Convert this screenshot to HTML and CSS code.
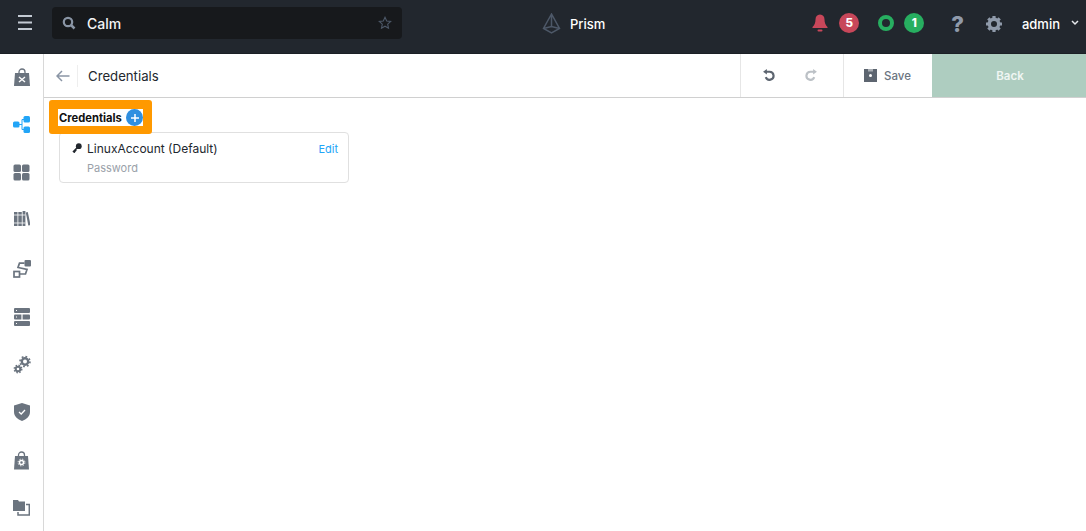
FILE: index.html
```html
<!DOCTYPE html>
<html lang="en">
  <head>
    <meta charset="utf-8" />
    <title>Prism - Calm</title>
    <link rel="stylesheet" href="styles.css">
  </head>
  <body>
    <header class="topbar">
      <svg class="menu-icon" width="16" height="15" viewBox="0 0 16 15">
        <path d="M1 1h14M1 7.500h14M1 14h14" stroke="#c3cad3" stroke-width="1.800" fill="none" />
      </svg>
      <div class="search">
        <svg width="14" height="14" viewBox="0 0 14 14">
          <circle cx="6" cy="6" r="4.200" stroke="#8a95a5" stroke-width="2.200" fill="none" />
          <path d="M9 9l3.500 3.500" stroke="#8a95a5" stroke-width="2.500" fill="none" />
        </svg>
        <span class="search-text">Calm</span>
        <svg class="star" width="14" height="14" viewBox="0 0 14 14">
          <path d="M7 1.300l1.700 3.700 4 .5-3 2.700.8 4L7 10.200 3.500 12.200l.8-4-3-2.700 4-.5z" stroke="#4d5868" stroke-width="1.100" fill="none" />
        </svg>
      </div>
      <div class="brand">
        <svg width="19" height="21" viewBox="0 0 19 21">
          <path d="M9.500 1L1.500 15.500l8 4.500 8-4.500zM9.500 1v12.500M1.500 15.500l8-2 8 2" stroke="#4d5868" stroke-width="1.500" fill="none" />
        </svg>
        <span>Prism</span>
      </div>
      <div class="status">
        <svg class="bell" width="16" height="18" viewBox="0 0 16 18">
          <path d="M8 0.500c-3 0-4.500 2.200-4.500 5 0 3.500-1 5.500-3 7.500v1h15v-1c-2-2-3-4-3-7.500 0-2.800-1.500-5-4.500-5z" fill="#c8475a" />
          <rect x="5.500" y="15.500" width="5" height="2" rx="1" fill="#c8475a" />
        </svg>
        <span class="count count-red">5</span>
        <span class="ring"></span>
        <span class="count count-green">1</span>
        <span class="help">?</span>
        <svg class="gear" width="18" height="18" viewBox="0 0 18 18">
          <circle cx="9" cy="9" r="4.700" stroke="#8f9aaa" stroke-width="3.400" fill="none" />
          <path d="M9 1v16M1 9h16M3.300 3.300l11.400 11.400M14.700 3.300L3.300 14.700" stroke="#8f9aaa" stroke-width="3.200" fill="none" stroke-dasharray="3.500 9 3.500" />
        </svg>
        <span class="user">admin</span>
        <svg width="8" height="6" viewBox="0 0 8 6">
          <path d="M1 1l3 3 3-3" stroke="#e6e9ed" stroke-width="1.500" fill="none" />
        </svg>
      </div>
    </header>

    <div class="main">
      <nav class="sidebar">
        <svg width="16" height="19" viewBox="0 0 16 19">
          <path d="M5 6V4a3 3 0 0 1 6 0v2" stroke="#6b747f" stroke-width="1.300" fill="none" />
          <path d="M1 5h14l1 13H0z" fill="#6b747f" />
          <path d="M5 9l6 5M11 9l-6 5" stroke="#fff" stroke-width="1.400" />
        </svg>
        <svg class="nudge" width="17" height="17" viewBox="0 0 17 17">
          <path d="M6 8.500h3M9 3.500v10M9 3.500h2M9 13.500h2" stroke="#22a5f7" stroke-width="1" fill="none" />
          <rect x="0" y="5.500" width="6.500" height="6" rx="1.500" fill="#22a5f7" />
          <rect x="10.500" y="0" width="6.500" height="6.500" rx="1.500" fill="#22a5f7" />
          <rect x="10.500" y="10.500" width="6.500" height="6.500" rx="1.500" fill="#22a5f7" />
        </svg>
        <svg class="nudge" width="17" height="17" viewBox="0 0 17 17">
          <rect x="0.500" y="0.500" width="7.500" height="7.500" rx="1.500" fill="#6b747f" />
          <rect x="9" y="0.500" width="7.500" height="7.500" rx="1.500" fill="#6b747f" />
          <rect x="0.500" y="9" width="7.500" height="7.500" rx="1.500" fill="#6b747f" />
          <rect x="9" y="9" width="7.500" height="7.500" rx="1.500" fill="#6b747f" />
        </svg>
        <svg class="books" width="16" height="16" viewBox="0 0 16 16">
          <path d="M0 1h3.500v14H0zM4.300 1h3.500v14H4.300zM8.600 0h2.800v15H8.600z" fill="#6b747f" />
          <path d="M11.800 1.500l2-.5L16.500 14l-2.200.6z" fill="#6b747f" />
          <path d="M0 4h11.400M0 12h11.400" stroke="#fff" stroke-width=".8" />
        </svg>
        <svg width="18" height="18" viewBox="0 0 18 18">
          <rect x="11.500" y="0" width="6.500" height="6.500" rx="1" fill="#6b747f" />
          <rect x="1" y="11.500" width="5.500" height="5.500" fill="#fff" stroke="#6b747f" stroke-width="1.700" />
          <path d="M11.500 3.200H6.500L5 7.500l9 2-1.500 4.500H6.500" stroke="#6b747f" stroke-width="1.700" fill="none" />
        </svg>
        <svg width="16" height="18" viewBox="0 0 16 18">
          <rect x="0" y="0" width="16" height="5" rx="1" fill="#6b747f" />
          <rect x="0" y="6.500" width="16" height="5" rx="1" fill="#6b747f" />
          <rect x="0" y="13" width="16" height="5" rx="1" fill="#6b747f" />
          <path d="M2 2.500h1M2 9h1M2 15.500h1M8 5v8" stroke="#fff" stroke-width="1.200" />
        </svg>
        <svg width="18" height="19" viewBox="0 0 18 19">
          <circle cx="12" cy="6.500" r="3.200" stroke="#6b747f" stroke-width="2.400" fill="none" />
          <circle cx="12" cy="6.500" r="5" stroke="#6b747f" stroke-width="1.600" stroke-dasharray="1.800 2.100" fill="none" />
          <circle cx="5" cy="14" r="2.300" stroke="#6b747f" stroke-width="2" fill="none" />
          <circle cx="5" cy="14" r="3.800" stroke="#6b747f" stroke-width="1.400" stroke-dasharray="1.500 1.500" fill="none" />
        </svg>
        <svg width="16" height="18" viewBox="0 0 16 18">
          <path d="M8 0l8 2.500V9c0 4-3.500 7.500-8 9-4.500-1.500-8-5-8-9V2.500z" fill="#6b747f" />
          <path d="M5 9l2.200 2L11 7" stroke="#fff" stroke-width="1.300" fill="none" />
        </svg>
        <svg width="15" height="19" viewBox="0 0 15 19">
          <path d="M4.500 6V4a3 3 0 0 1 6 0v2" stroke="#6b747f" stroke-width="1.300" fill="none" />
          <path d="M1 5h13l1 13.500H0z" fill="#6b747f" />
          <circle cx="7.500" cy="11.500" r="2" stroke="#fff" stroke-width="1.500" fill="none" />
          <circle cx="7.500" cy="11.500" r="3.400" stroke="#fff" stroke-width="1" stroke-dasharray="1.300 1.400" fill="none" />
        </svg>
        <svg width="17" height="16" viewBox="0 0 17 16">
          <path d="M0 0h5l1 1.500h6V11H0z" fill="#6b747f" />
          <path d="M13 4.500h3.300V15H5v-3" stroke="#6b747f" stroke-width="1.500" fill="none" />
        </svg>
      </nav>

      <section class="editor">
        <div class="toolbar">
          <svg class="back-arrow" width="14" height="12" viewBox="0 0 14 12">
            <path d="M13.500 6H1.500M6 1L1 6l5 5" stroke="#8a95a5" stroke-width="1.500" fill="none" />
          </svg>
          <h1 class="page-title">Credentials</h1>
          <div class="history">
            <svg width="13" height="13" viewBox="0 0 12 12">
              <path d="M3.500 2.500h3.500a3.700 3.700 0 1 1-3.500 5" stroke="#5d6570" stroke-width="2" fill="none" />
              <path d="M4.500 0L1 2.500 4.500 5z" fill="#5d6570" />
            </svg>
            <svg width="13" height="13" viewBox="0 0 12 12">
              <path d="M8.500 2.500H5a3.700 3.700 0 1 0 3.500 5" stroke="#bcc1c6" stroke-width="2" fill="none" />
              <path d="M7.500 0L11 2.500 7.500 5z" fill="#bcc1c6" />
            </svg>
          </div>
          <div class="save">
            <svg width="13" height="13" viewBox="0 0 13 13">
              <rect width="13" height="13" fill="#5d6570" />
              <path d="M4 0h5v2.500H4z" fill="#a9aeb4" />
              <circle cx="6.500" cy="6.500" r="1.500" fill="#fff" />
            </svg>
            <span>Save</span>
          </div>
          <div class="back-btn">Back</div>
        </div>

        <div class="content">
          <div class="highlight">
            <div class="cred-heading">
              <span>Credentials</span>
              <span class="add-btn">
                <svg width="8" height="8" viewBox="0 0 8 8">
                  <path d="M4 0v8M0 4h8" stroke="#fff" stroke-width="1.500" />
                </svg>
              </span>
            </div>
          </div>
          <div class="cred-card">
            <div class="cred-row">
              <svg width="10" height="10" viewBox="0 0 10 10">
                <circle cx="6.800" cy="3.200" r="2.900" fill="#22272e" />
                <path d="M5.500 4.500L1 9M1.500 8.500l1.500 1M3 7l1.200 1" stroke="#22272e" stroke-width="1.700" fill="none" />
              </svg>
              <span class="cred-name">LinuxAccount (Default)</span>
              <a class="cred-edit">Edit</a>
            </div>
            <div class="cred-type">Password</div>
          </div>
        </div>
      </section>
    </div>
  </body>
</html>
```

FILE: styles.css
```css
* {
  box-sizing: border-box;
}

html,
body {
  height: 100%;
}

body {
  margin: 0;
  display: flex;
  flex-direction: column;
  font-family: "Inter", "Liberation Sans", sans-serif;
  font-size: 13px;
  color: #22272e;
  background-color: #fff;
  overflow: hidden;
}

/* Top bar */
.topbar {
  position: relative;
  display: flex;
  align-items: center;
  flex: none;
  height: 54px;
  padding: 0 0 8px 17px;
  background-color: #22272e;
  border-bottom: 1px solid #1b1f25;
  color: #fff;
}

.menu-icon {
  margin-right: 19px;
  flex: none;
}

.search {
  display: flex;
  align-items: center;
  width: 350px;
  height: 32px;
  padding: 0 10px;
  background-color: #17191c;
  border-radius: 4px;
}

.search-text {
  margin: 2px 0 0 11px;
  font-size: 14px;
  font-weight: 500;
  color: #f2f4f6;
}

.star {
  margin-left: auto;
}

.brand {
  position: absolute;
  left: 542px;
  top: 13px;
  display: flex;
  align-items: center;
  gap: 9px;
  font-size: 13px;
  font-weight: 500;
}

.status {
  display: flex;
  align-items: center;
  margin-left: auto;
  padding-right: 7px;
}

.bell {
  margin-right: 11px;
}

.count {
  display: flex;
  align-items: center;
  justify-content: center;
  width: 20px;
  height: 20px;
  border-radius: 50%;
  font-size: 11.500px;
  font-weight: 800;
  color: #fff;
}

.count-red {
  background-color: #c8475a;
  margin-right: 19px;
}

.count-green {
  background-color: #27ae60;
}

.ring {
  width: 16px;
  height: 16px;
  margin-right: 10px;
  border: 4px solid #27ae60;
  border-radius: 50%;
}

.help {
  margin: 2px 21px 0 27px;
  font-size: 22px;
  font-weight: 800;
  line-height: 1;
  color: #8f9aaa;
}

.gear {
  margin: 2px 19px 0 0;
}

.user {
  margin: 2px 11px 0 0;
  font-weight: 500;
  font-size: 13px;
}

/* Main area */
.main {
  display: flex;
  flex: 1;
  min-height: 0;
}

.sidebar {
  display: grid;
  grid-auto-rows: 47.8px;
  justify-items: center;
  align-items: center;
  flex: none;
  width: 44px;
  border-right: 1px solid #d8d8d8;
}

.nudge {
  margin-bottom: 2px;
}

.books {
  margin-bottom: 4px;
}

.editor {
  flex: 1;
  min-width: 0;
}

.toolbar {
  display: flex;
  align-items: center;
  height: 44px;
  border-bottom: 1px solid #d0d0d0;
}

.back-arrow {
  margin-left: 12px;
  flex: none;
}

.page-title {
  margin: 0 0 0 7px;
  padding-left: 10px;
  height: 22px;
  line-height: 23px;
  border-left: 1px solid #eee;
  font-size: 13.200px;
  font-weight: 400;
}

.history {
  display: flex;
  align-items: center;
  gap: 30px;
  height: 100%;
  margin-left: auto;
  padding: 0 25px 0 21px;
  border-left: 1px solid #e6e6e6;
}

.save {
  display: flex;
  align-items: center;
  gap: 7px;
  width: 89px;
  height: 100%;
  padding-left: 20px;
  border-left: 1px solid #e6e6e6;
  font-size: 11.500px;
  font-weight: 500;
  color: #6b747f;
}

.back-btn {
  display: flex;
  align-items: center;
  justify-content: center;
  width: 154px;
  height: 100%;
  padding-left: 2px;
  background-color: #aecdc0;
  color: #f0f6f3;
  font-size: 11.500px;
  font-weight: 600;
}

/* Credentials list */
.content {
  padding: 2px 0 0 5px;
}

.highlight {
  position: relative;
  z-index: 1;
  width: 103px;
  height: 34px;
  padding: 9px 9px 8px;
  background-color: #ff9900;
  border-radius: 3px;
}

.cred-heading {
  display: flex;
  align-items: center;
  justify-content: space-between;
  height: 17px;
  padding-left: 1px;
  background-color: #fff;
  font-size: 11.200px;
  font-weight: 700;
  color: #111;
}

.add-btn {
  display: flex;
  align-items: center;
  justify-content: center;
  width: 17px;
  height: 17px;
  background-color: #2f8fe0;
  border-radius: 50%;
}

.cred-card {
  width: 290px;
  height: 51px;
  margin: -2px 0 0 10px;
  padding: 7px 10px 0 12px;
  border: 1px solid #e0e0e0;
  border-radius: 4px;
}

.cred-row {
  display: flex;
  align-items: center;
  gap: 5px;
  height: 16px;
}

.cred-name {
  font-size: 12px;
  color: #22272e;
}

.cred-edit {
  margin-left: auto;
  margin-top: 2px;
  font-size: 11px;
  color: #22a5f7;
}

.cred-type {
  margin: 5px 0 0 15px;
  font-size: 11px;
  color: #9aa1a9;
}
```
